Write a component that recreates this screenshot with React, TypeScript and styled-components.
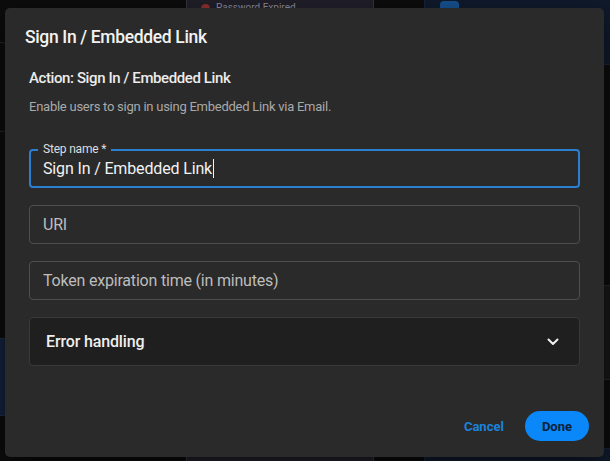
import React from "react";
import styled, { createGlobalStyle } from "styled-components";

const Global = createGlobalStyle`
  html, body { margin: 0; padding: 0; background: #0c0c0c; }
  body { font-family: Roboto, "Noto Sans", Arial, sans-serif; }
  * { box-sizing: border-box; }
`;

const Canvas = styled.div`
  position: relative;
  width: 610px;
  height: 461px;
  overflow: hidden;
  background: #0c0c0c;
`;

const Node = styled.div<{ $x: number; $y: number; $w: number; $h: number; $bg: string; $line: string }>`
  position: absolute;
  left: ${(p) => p.$x}px;
  top: ${(p) => p.$y}px;
  width: ${(p) => p.$w}px;
  height: ${(p) => p.$h}px;
  background: ${(p) => p.$bg};
  border: 1px solid ${(p) => p.$line};
  border-radius: 6px;
`;

const NodeRow = styled.div`
  display: flex;
  align-items: center;
  gap: 6px;
  padding: 0 0 0 14px;
  margin-top: 31px;
  font-size: 10px;
  line-height: 12px;
  color: #8b8a99;
`;

const RedDot = styled.span`
  width: 9px;
  height: 9px;
  border-radius: 50%;
  background: #8e2f2f;
`;

const BlueSquare = styled.div`
  width: 19px;
  height: 19px;
  border-radius: 4px;
  background: #15508e;
  margin: 30px 0 0 15px;
`;

const Dialog = styled.div`
  position: absolute;
  left: 5px;
  top: 8px;
  width: 599px;
  height: 449px;
  display: flex;
  flex-direction: column;
  background: #2a2a2a;
  border-radius: 5px;
  box-shadow: 0 8px 24px rgba(0, 0, 0, 0.5);
`;

const Title = styled.h2`
  margin: 0;
  padding: 17px 20px 0;
  font-size: 17.5px;
  font-weight: 500;
  line-height: 24px;
  letter-spacing: -0.35px;
  color: #f2f2f2;
`;

const Body = styled.div`
  display: flex;
  flex-direction: column;
  padding: 0 24px;
`;

const ActionHeading = styled.h3`
  margin: 19px 0 0;
  font-size: 15px;
  font-weight: 500;
  line-height: 20px;
  letter-spacing: -0.4px;
  color: #ececec;
`;

const Description = styled.p`
  margin: 9px 0 0;
  font-size: 13px;
  line-height: 20px;
  letter-spacing: -0.25px;
  color: #a9a9a9;
`;

const Fields = styled.div`
  display: flex;
  flex-direction: column;
  gap: 17px;
  margin-top: 32px;
`;

const FieldBox = styled.label<{ $focused?: boolean }>`
  position: relative;
  display: flex;
  align-items: center;
  height: 39px;
  padding-left: ${(p) => (p.$focused ? 12 : 13)}px;
  border: ${(p) => (p.$focused ? "2px solid #2a7fd1" : "1px solid #4e4e4e")};
  border-radius: 4px;
`;

const FloatLabel = styled.span`
  position: absolute;
  left: 7px;
  top: -9px;
  padding: 0 5px;
  background: #2a2a2a;
  font-size: 12px;
  line-height: 14px;
  letter-spacing: -0.2px;
  color: #dedede;
`;

const ValueText = styled.span`
  font-size: 16px;
  letter-spacing: -0.15px;
  color: #f2f2f2;
  white-space: nowrap;
`;

const Caret = styled.span`
  display: inline-block;
  width: 1px;
  height: 19px;
  margin-left: 1px;
  background: #f2f2f2;
`;

const TextInput = styled.input`
  flex: 1;
  min-width: 0;
  padding: 0;
  border: 0;
  outline: none;
  background: transparent;
  font-family: inherit;
  font-size: 16px;
  letter-spacing: -0.2px;
  color: #f2f2f2;
  &::placeholder {
    color: #bdbdbd;
    opacity: 1;
  }
`;

const Accordion = styled.div`
  display: flex;
  align-items: center;
  justify-content: space-between;
  height: 49px;
  padding: 0 20px 0 16px;
  background: #1f1f1f;
  border: 1px solid #393939;
  border-radius: 4px;
  font-size: 16px;
  font-weight: 500;
  letter-spacing: -0.15px;
  color: #eeeeee;
`;

const Footer = styled.div`
  margin-top: auto;
  display: flex;
  justify-content: flex-end;
  align-items: center;
  gap: 15px;
  padding: 0 15px 16px;
`;

const TextButton = styled.button`
  height: 30px;
  padding: 0 6px;
  border: 0;
  background: transparent;
  font-family: inherit;
  font-size: 13px;
  font-weight: 700;
  color: #1a82db;
`;

const PrimaryButton = styled.button`
  height: 30px;
  padding: 0 17px;
  border: 0;
  border-radius: 15px;
  background: #0a87f8;
  font-family: inherit;
  font-size: 13px;
  font-weight: 700;
  color: #0a1f38;
`;

export default function App() {
  return (
    <>
      <Global />
      <Canvas>
        <Node $x={-100} $y={42} $w={108} $h={90} $bg="#0c0c0c" $line="#262626" />
        <Node $x={-100} $y={338} $w={110} $h={78} $bg="#13213a" $line="#1d2c45" />
        <Node $x={186} $y={-30} $w={188} $h={560} $bg="#201f29" $line="#34333f">
          <NodeRow>
            <RedDot />
            Password Expired
          </NodeRow>
        </Node>
        <Node $x={424} $y={-30} $w={260} $h={95} $bg="#0f1a2b" $line="#15233a">
          <BlueSquare />
        </Node>
        <Node $x={580} $y={285} $w={100} $h={95} $bg="#171717" $line="#262626" />
        <Node $x={424} $y={448} $w={260} $h={80} $bg="#0f1a2b" $line="#15233a" />

        <Dialog role="dialog">
          <Title>Sign In / Embedded Link</Title>
          <Body>
            <ActionHeading>Action: Sign In / Embedded Link</ActionHeading>
            <Description>Enable users to sign in using Embedded Link via Email.</Description>
            <Fields>
              <FieldBox $focused>
                <FloatLabel>Step name *</FloatLabel>
                <ValueText>Sign In / Embedded Link</ValueText>
                <Caret />
              </FieldBox>
              <FieldBox>
                <TextInput placeholder="URI" />
              </FieldBox>
              <FieldBox>
                <TextInput placeholder="Token expiration time (in minutes)" />
              </FieldBox>
              <Accordion>
                Error handling
                <svg width="12" height="8" viewBox="0 0 12 8" fill="none">
                  <polyline points="1.5,1.5 6,6 10.5,1.5" stroke="#f0f0f0" strokeWidth="2" strokeLinecap="round" strokeLinejoin="round" />
                </svg>
              </Accordion>
            </Fields>
          </Body>
          <Footer>
            <TextButton>Cancel</TextButton>
            <PrimaryButton>Done</PrimaryButton>
          </Footer>
        </Dialog>
      </Canvas>
    </>
  );
}
